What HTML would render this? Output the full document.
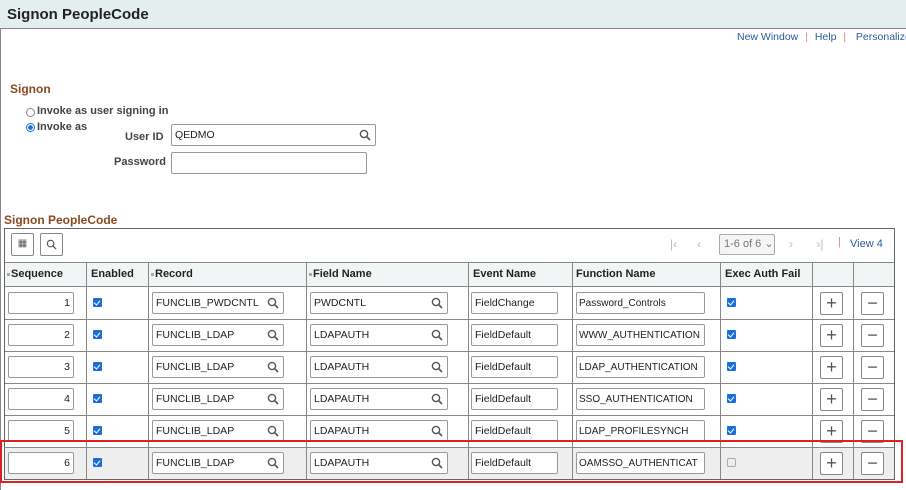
<!DOCTYPE html>
<html><head><style>
*{box-sizing:border-box;margin:0;padding:0}
body{width:906px;height:490px;position:relative;background:#fff;font-family:"Liberation Sans",Arial,sans-serif;font-size:11px;color:#333;overflow:hidden}
.a{position:absolute;white-space:nowrap}
.in{position:absolute;border:1px solid #999;border-radius:2px;background:#fff;height:22px;font-size:10.5px;display:flex;align-items:center;padding:0 3px;color:#222;overflow:hidden;white-space:nowrap}
.q{position:absolute;right:4px;top:4px;width:12px;height:12px}
.cb{position:absolute;width:9px;height:9px;background:#1a6fd8;border-radius:1px}
.cb:after{content:"";position:absolute;left:2px;top:1px;width:3px;height:5px;border:solid #fff;border-width:0 1.5px 1.5px 0;transform:rotate(40deg)}
.btn{position:absolute;width:23px;height:23px;border:1px solid #888;border-radius:2px;background:#fff;font-size:18px;line-height:20px;text-align:center;color:#555}
.hd{position:absolute;font-weight:bold;font-size:11px;color:#222;white-space:nowrap}
.s{display:inline-block;width:3px;height:3px;background:#aaa;vertical-align:middle;margin-right:1px}
</style></head><body>
<div class="a" style="left:0;top:0;width:906px;height:29px;background:#e5eeee;border-bottom:1px solid #888"></div>
<div class="a" style="left:7px;top:6px;font-size:15px;font-weight:bold;color:#222">Signon PeopleCode</div>
<div class="a" style="left:0;top:29px;width:1px;height:461px;background:#888"></div>
<div class="a" style="left:737px;top:31px;color:#2a5b9c;font-size:10.5px">New Window <span style="color:#c88;padding:0 4px">|</span> Help <span style="color:#c88;padding:0 4px">|</span> &nbsp;Personalize</div>
<div class="a" style="left:10px;top:82px;color:#8b4a1f;font-size:12px;font-weight:bold">Signon</div>
<div class="a" style="left:26px;top:108px;width:9px;height:9px;border:1px solid #888;border-radius:50%"></div>
<div class="a" style="left:37px;top:105px;font-weight:bold;color:#444">Invoke as user signing in</div>
<div class="a" style="left:26px;top:123px;width:9px;height:9px;border:1px solid #1a6fd8;border-radius:50%;background:radial-gradient(#1a6fd8 45%,#fff 50%)"></div>
<div class="a" style="left:37px;top:121px;font-weight:bold;color:#444">Invoke as</div>
<div class="a" style="left:125px;top:131px;font-weight:bold;color:#444">User ID</div>
<div class="in" style="left:171px;top:124px;width:205px">QEDMO<svg class="q" viewBox="0 0 12 12"><circle cx="5" cy="5" r="3.6" fill="none" stroke="#555" stroke-width="1.4"/><path d="M7.6 7.6L11 11" stroke="#555" stroke-width="1.6"/></svg></div>
<div class="a" style="left:114px;top:156px;font-weight:bold;color:#444">Password</div>
<div class="in" style="left:171px;top:152px;width:196px"></div>
<div class="a" style="left:4px;top:213px;color:#8b4a1f;font-size:12px;font-weight:bold">Signon PeopleCode</div>
<div class="a" style="left:4px;top:228px;width:891px;height:252px;border:1px solid #666"></div>
<div class="btn" style="left:11px;top:233px;font-size:10px">▦</div>
<div class="btn" style="left:40px;top:233px"><svg viewBox="0 0 12 12" style="width:11px;height:11px;margin-top:5px"><circle cx="5" cy="5" r="3.6" fill="none" stroke="#555" stroke-width="1.2"/><path d="M7.6 7.6L11 11" stroke="#555" stroke-width="1.4"/></svg></div>
<div class="a" style="left:670px;top:237px;color:#bbb;font-size:12px">|&lsaquo; &nbsp;&nbsp;&nbsp;&nbsp; &lsaquo;</div>
<div class="a" style="left:719px;top:234px;width:56px;height:21px;border:1px solid #aaa;border-radius:2px;background:#f5f5f5;color:#777;font-size:11px;line-height:19px;padding-left:4px">1-6 of 6 ⌄</div>
<div class="a" style="left:789px;top:237px;color:#bbb;font-size:12px">&rsaquo; &nbsp;&nbsp;&nbsp;&nbsp;&nbsp; &rsaquo;|</div>
<div class="a" style="left:838px;top:236px;color:#c88">|</div>
<div class="a" style="left:850px;top:238px;color:#2a5b9c">View 4</div>
<div class="a" style="left:5px;top:262px;width:889px;height:25px;background:#f2f5f5;border-top:1px solid #888;border-bottom:1px solid #888"></div>
<div id="g"></div>
<div class="hd" style="left:7px;top:268px"><span class="s"></span>Sequence</div>
<div class="hd" style="left:91px;top:268px">Enabled</div>
<div class="hd" style="left:151px;top:268px"><span class="s"></span>Record</div>
<div class="hd" style="left:309px;top:268px"><span class="s"></span>Field Name</div>
<div class="hd" style="left:473px;top:268px">Event Name</div>
<div class="hd" style="left:576px;top:268px">Function Name</div>
<div class="hd" style="left:725px;top:268px">Exec Auth Fail</div>
<script>
var cols=[86,148,306,468,572,720,812,853];
var rows=[["1","FUNCLIB_PWDCNTL","PWDCNTL","FieldChange","Password_Controls",1],["2","FUNCLIB_LDAP","LDAPAUTH","FieldDefault","WWW_AUTHENTICATION",1],["3","FUNCLIB_LDAP","LDAPAUTH","FieldDefault","LDAP_AUTHENTICATION",1],["4","FUNCLIB_LDAP","LDAPAUTH","FieldDefault","SSO_AUTHENTICATION",1],["5","FUNCLIB_LDAP","LDAPAUTH","FieldDefault","LDAP_PROFILESYNCH",1],["6","FUNCLIB_LDAP","LDAPAUTH","FieldDefault","OAMSSO_AUTHENTICAT",0]];
var q='<svg class="q" viewBox="0 0 12 12"><circle cx="5" cy="5" r="3.6" fill="none" stroke="#555" stroke-width="1.4"/><path d="M7.6 7.6L11 11" stroke="#555" stroke-width="1.6"/></svg>';
var h='';
h+='<div class="a" style="left:5px;top:447px;width:889px;height:32px;background:#eee"></div>';
cols.forEach(function(c){h+='<div class="a" style="left:'+c+'px;top:262px;width:1px;height:217px;background:#888"></div>'});
rows.forEach(function(r,i){var y=287+i*32;
if(i>0)h+='<div class="a" style="left:5px;top:'+y+'px;width:889px;height:1px;background:#888"></div>';
h+='<div class="in" style="left:8px;top:'+(y+5)+'px;width:66px;justify-content:flex-end">'+r[0]+'</div>';
h+='<div class="cb" style="left:93px;top:'+(y+11)+'px"></div>';
h+='<div class="in" style="left:152px;top:'+(y+5)+'px;width:132px">'+r[1]+q+'</div>';
h+='<div class="in" style="left:310px;top:'+(y+5)+'px;width:138px">'+r[2]+q+'</div>';
h+='<div class="in" style="left:471px;top:'+(y+5)+'px;width:87px">'+r[3]+'</div>';
h+='<div class="in" style="left:576px;top:'+(y+5)+'px;width:129px;padding:0 2px;font-size:10px">'+r[4]+'</div>';
h+=r[5]?'<div class="cb" style="left:727px;top:'+(y+11)+'px"></div>':'<div class="a" style="left:727px;top:'+(y+11)+'px;width:9px;height:9px;border:1px solid #aaa;border-radius:2px"></div>';
h+='<div class="btn" style="left:820px;top:'+(y+5)+'px">+</div>';
h+='<div class="btn" style="left:861px;top:'+(y+5)+'px">−</div>';
});
h+='<div class="a" style="left:0;top:440px;width:903px;height:43px;border:2px solid #e02020"></div>';
document.getElementById('g').outerHTML=h;
</script>
</body></html>
